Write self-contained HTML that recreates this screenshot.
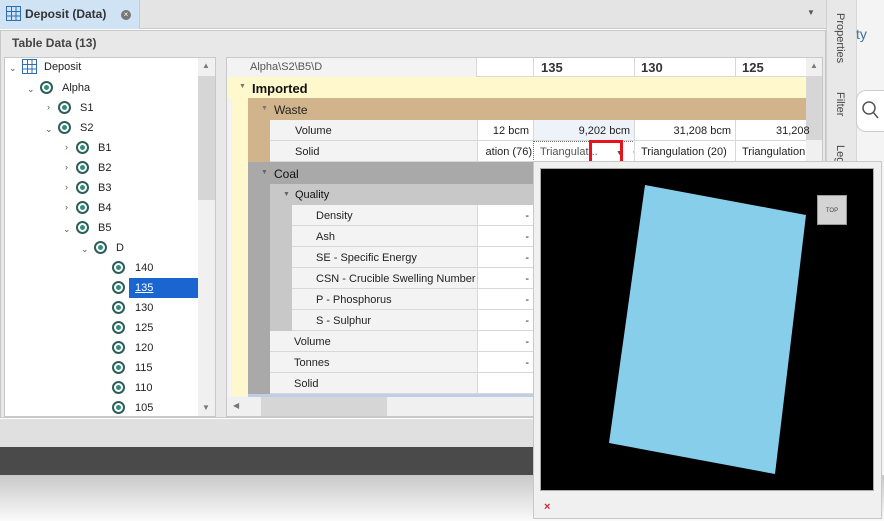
<!DOCTYPE html>
<html><head><meta charset="utf-8"><style>
*{box-sizing:border-box;margin:0;padding:0}
body{width:884px;height:521px;overflow:hidden;background:#fff;font-family:"Liberation Sans",sans-serif;font-size:11px;color:#222;position:relative}
.a{position:absolute}
.lab{position:absolute;background:#f3f3f3;height:21px;line-height:22px;border-bottom:1px solid #d8d8d8}
.val{position:absolute;background:#fff;height:21px;line-height:22px;border-bottom:1px solid #d8d8d8;border-left:1px solid #d8d8d8;text-align:right;padding-right:5px}
.ti{position:absolute;font-size:11px;height:20px;line-height:21px}
.rad{position:absolute;width:13px;height:13px;border:2px solid #2f5d5a;border-radius:50%}
.rad:after{content:"";position:absolute;left:2px;top:2px;width:5px;height:5px;border-radius:50%;background:#2f8f7c}
.chev{position:absolute;font-size:9px;color:#555}
</style></head><body>
<div class="a" style="left:0;top:0;width:884px;height:29px;background:#e4e4e4;border-bottom:1px solid #c8c8c8"></div>
<div class="a" style="left:0;top:0;width:140px;height:29px;background:#cfe3f5;border-right:1px solid #b9cfe3"></div>
<svg class="a" style="left:6px;top:6px" width="15" height="15"><rect x="0.5" y="0.5" width="14" height="14" fill="none" stroke="#2d6db5"/><path d="M0 5.5H15M0 10H15M5.5 0V15M10 0V15" stroke="#2d6db5"/></svg>
<div class="a" style="left:25px;top:7px;font-weight:bold;font-size:12px;color:#333">Deposit (Data)</div>
<div class="a" style="left:121px;top:10px;width:10px;height:10px;border-radius:50%;background:#777;color:#fff;font-size:8px;line-height:10px;text-align:center">×</div>
<div class="a" style="left:807px;top:8px;font-size:8px;color:#555">▼</div>
<div class="a" style="left:0;top:30px;width:826px;height:388px;background:#e8e8e8;border:1px solid #c8c8c8"></div>
<div class="a" style="left:12px;top:36px;font-weight:bold;font-size:12px;color:#444">Table Data (13)</div>
<div class="a" style="left:4px;top:57px;width:212px;height:360px;background:#fff;border:1px solid #c8c8c8"></div>
<div class="a" style="left:198px;top:58px;width:17px;height:358px;background:#f0f0f0"></div>
<div class="a" style="left:198px;top:76px;width:17px;height:124px;background:#d6d6d6"></div>
<div class="a" style="left:202px;top:61px;font-size:8px;color:#777">▲</div>
<div class="a" style="left:202px;top:403px;font-size:8px;color:#777">▼</div>
<div class="chev" style="left:9px;top:63px">⌄</div>
<svg class="a" style="left:22px;top:59px" width="15" height="15"><rect x="0.5" y="0.5" width="14" height="14" fill="none" stroke="#2d6db5"/><path d="M0 5.5H15M0 10H15M5.5 0V15M10 0V15" stroke="#2d6db5"/></svg>
<div class="ti" style="left:44px;top:57px">Deposit</div>
<div class="chev" style="left:27px;top:84px">⌄</div><div class="rad" style="left:40px;top:81px"></div><div class="ti" style="left:62px;top:78px">Alpha</div>
<div class="chev" style="left:47px;top:102px">›</div><div class="rad" style="left:58px;top:101px"></div><div class="ti" style="left:80px;top:98px">S1</div>
<div class="chev" style="left:45px;top:124px">⌄</div><div class="rad" style="left:58px;top:121px"></div><div class="ti" style="left:80px;top:118px">S2</div>
<div class="chev" style="left:65px;top:142px">›</div><div class="rad" style="left:76px;top:141px"></div><div class="ti" style="left:98px;top:138px">B1</div>
<div class="chev" style="left:65px;top:162px">›</div><div class="rad" style="left:76px;top:161px"></div><div class="ti" style="left:98px;top:158px">B2</div>
<div class="chev" style="left:65px;top:182px">›</div><div class="rad" style="left:76px;top:181px"></div><div class="ti" style="left:98px;top:178px">B3</div>
<div class="chev" style="left:65px;top:202px">›</div><div class="rad" style="left:76px;top:201px"></div><div class="ti" style="left:98px;top:198px">B4</div>
<div class="chev" style="left:63px;top:224px">⌄</div><div class="rad" style="left:76px;top:221px"></div><div class="ti" style="left:98px;top:218px">B5</div>
<div class="chev" style="left:81px;top:244px">⌄</div><div class="rad" style="left:94px;top:241px"></div><div class="ti" style="left:116px;top:238px">D</div>
<div class="rad" style="left:112px;top:261px"></div><div class="ti" style="left:135px;top:258px">140</div>
<div class="a" style="left:129px;top:278px;width:69px;height:20px;background:#1a66d1"></div>
<div class="rad" style="left:112px;top:281px"></div><div class="ti" style="left:135px;top:278px;color:#fff;text-decoration:underline">135</div>
<div class="rad" style="left:112px;top:301px"></div><div class="ti" style="left:135px;top:298px">130</div>
<div class="rad" style="left:112px;top:321px"></div><div class="ti" style="left:135px;top:318px">125</div>
<div class="rad" style="left:112px;top:341px"></div><div class="ti" style="left:135px;top:338px">120</div>
<div class="rad" style="left:112px;top:361px"></div><div class="ti" style="left:135px;top:358px">115</div>
<div class="rad" style="left:112px;top:381px"></div><div class="ti" style="left:135px;top:378px">110</div>
<div class="rad" style="left:112px;top:401px"></div><div class="ti" style="left:135px;top:398px">105</div>
<div class="a" style="left:226px;top:57px;width:597px;height:360px;background:#f3f3f3;border:1px solid #c8c8c8"></div>
<div class="a" style="left:227px;top:58px;width:580px;height:19px;background:#fff;border-bottom:1px solid #d8d8d8"></div>
<div class="a" style="left:227px;top:58px;width:250px;height:19px;background:#f3f3f3;border-right:1px solid #d8d8d8"></div>
<div class="a" style="left:250px;top:61px;color:#555">Alpha\S2\B5\D</div>
<div class="a" style="left:533px;top:58px;height:19px;border-left:1px solid #d8d8d8"></div>
<div class="a" style="left:634px;top:58px;height:19px;border-left:1px solid #d8d8d8"></div>
<div class="a" style="left:735px;top:58px;height:19px;border-left:1px solid #d8d8d8"></div>
<div class="a" style="left:541px;top:60px;font-weight:bold;font-size:13px;color:#333">135</div>
<div class="a" style="left:641px;top:60px;font-weight:bold;font-size:13px;color:#333">130</div>
<div class="a" style="left:742px;top:60px;font-weight:bold;font-size:13px;color:#333">125</div>
<div class="a" style="left:806px;top:58px;width:16px;height:338px;background:#f0f0f0"></div>
<div class="a" style="left:806px;top:76px;width:16px;height:64px;background:#d6d6d6"></div>
<div class="a" style="left:810px;top:61px;font-size:8px;color:#777">▲</div>
<div class="a" style="left:227px;top:77px;width:579px;height:21px;background:#fff8cc"></div>
<div class="a" style="left:232px;top:98px;width:16px;height:298px;background:#fff8cc"></div>
<div class="a" style="left:239px;top:83px;font-size:7px;color:#777">▼</div>
<div class="a" style="left:252px;top:81px;font-weight:bold;font-size:13px;color:#111">Imported</div>
<div class="a" style="left:248px;top:98px;width:558px;height:22px;background:#d2b48c"></div>
<div class="a" style="left:248px;top:120px;width:22px;height:42px;background:#d2b48c"></div>
<div class="a" style="left:261px;top:105px;font-size:7px;color:#777">▼</div>
<div class="a" style="left:274px;top:103px;font-size:12px;color:#222">Waste</div>
<div class="lab" style="left:270px;top:120px;width:208px;padding-left:25px">Volume</div>
<div class="val" style="left:477px;top:120px;width:57px">12 bcm</div>
<div class="val" style="left:533px;top:120px;width:102px;background:#eef3fa">9,202 bcm</div>
<div class="val" style="left:634px;top:120px;width:102px">31,208 bcm</div>
<div class="val" style="left:735px;top:120px;width:71px;text-align:left;padding-left:40px">31,208</div>
<div class="lab" style="left:270px;top:141px;width:208px;padding-left:25px">Solid</div>
<div class="val" style="left:477px;top:141px;width:57px;padding-right:2px">ation (76)</div>
<div class="val" style="left:533px;top:141px;width:102px;text-align:left;padding-left:6px;border:1px dotted #777;color:#555;line-height:20px">Triangulat...&nbsp;&nbsp;&nbsp;&nbsp;&nbsp;&nbsp;<span style="font-size:7px">▼</span>&nbsp;&nbsp;&nbsp;··</div>
<div class="val" style="left:634px;top:141px;width:102px;text-align:left;padding-left:6px">Triangulation (20)</div>
<div class="val" style="left:735px;top:141px;width:71px;text-align:left;padding-left:6px;overflow:hidden;white-space:nowrap">Triangulation</div>
<div class="a" style="left:589px;top:140px;width:34px;height:31px;border:3px solid #e8131a"></div>
<div class="a" style="left:248px;top:162px;width:558px;height:22px;background:#a9a9a9"></div>
<div class="a" style="left:248px;top:184px;width:22px;height:210px;background:#a9a9a9"></div>
<div class="a" style="left:261px;top:169px;font-size:7px;color:#666">▼</div>
<div class="a" style="left:274px;top:167px;font-size:12px;color:#111">Coal</div>
<div class="a" style="left:270px;top:184px;width:536px;height:21px;background:#c8c8c8"></div>
<div class="a" style="left:270px;top:205px;width:22px;height:126px;background:#c8c8c8"></div>
<div class="a" style="left:283px;top:191px;font-size:7px;color:#666">▼</div>
<div class="a" style="left:295px;top:189px;color:#111">Quality</div>
<div class="lab" style="left:292px;top:205px;width:186px;padding-left:24px">Density</div><div class="val" style="left:477px;top:205px;width:57px">-</div>
<div class="lab" style="left:292px;top:226px;width:186px;padding-left:24px">Ash</div><div class="val" style="left:477px;top:226px;width:57px">-</div>
<div class="lab" style="left:292px;top:247px;width:186px;padding-left:24px">SE - Specific Energy</div><div class="val" style="left:477px;top:247px;width:57px">-</div>
<div class="lab" style="left:292px;top:268px;width:186px;padding-left:24px">CSN - Crucible Swelling Number</div><div class="val" style="left:477px;top:268px;width:57px">-</div>
<div class="lab" style="left:292px;top:289px;width:186px;padding-left:24px">P - Phosphorus</div><div class="val" style="left:477px;top:289px;width:57px">-</div>
<div class="lab" style="left:292px;top:310px;width:186px;padding-left:24px">S - Sulphur</div><div class="val" style="left:477px;top:310px;width:57px">-</div>
<div class="lab" style="left:270px;top:331px;width:208px;padding-left:24px">Volume</div><div class="val" style="left:477px;top:331px;width:57px">-</div>
<div class="lab" style="left:270px;top:352px;width:208px;padding-left:24px">Tonnes</div><div class="val" style="left:477px;top:352px;width:57px">-</div>
<div class="lab" style="left:270px;top:373px;width:208px;padding-left:24px">Solid</div><div class="val" style="left:477px;top:373px;width:57px"></div>
<div class="a" style="left:248px;top:394px;width:558px;height:3px;background:#c0cde3"></div>
<div class="a" style="left:227px;top:397px;width:579px;height:19px;background:#f0f0f0"></div>
<div class="a" style="left:261px;top:397px;width:126px;height:19px;background:#d6d6d6"></div>
<div class="a" style="left:233px;top:401px;font-size:8px;color:#777">◀</div>
<div class="a" style="left:0;top:419px;width:826px;height:28px;background:#e0e0e0"></div>
<div class="a" style="left:0;top:447px;width:826px;height:28px;background:#4a4a4a"></div>
<div class="a" style="left:0;top:475px;width:884px;height:46px;background:linear-gradient(#c8c8c8,#fafafa)"></div>
<div class="a" style="left:826px;top:0;width:30px;height:475px;background:#e8e8e8;border-left:1px solid #d0d0d0"></div>
<div class="a" style="left:856px;top:0;width:28px;height:475px;background:#f4f4f4;border-left:1px solid #d8d8d8"></div>
<div class="a" style="left:834px;top:13px;writing-mode:vertical-rl;color:#444">Properties</div>
<div class="a" style="left:834px;top:92px;writing-mode:vertical-rl;color:#444">Filter</div>
<div class="a" style="left:834px;top:145px;writing-mode:vertical-rl;color:#444">Leg</div>
<div class="a" style="left:856px;top:26px;color:#3b6fb0;font-size:14px">ty</div>
<div class="a" style="left:856px;top:90px;width:28px;height:42px;border:1px solid #ccc;border-right:none;border-radius:10px 0 0 10px;background:#fff"></div>
<svg class="a" style="left:861px;top:100px" width="18" height="20"><circle cx="8" cy="8" r="6" fill="none" stroke="#555" stroke-width="1.5"/><path d="M12 12L17 18" stroke="#555" stroke-width="1.5"/></svg>
<div class="a" style="left:533px;top:161px;width:349px;height:358px;background:#f0f0f0;border:1px solid #c8c8c8"></div>
<div class="a" style="left:540px;top:168px;width:334px;height:323px;background:#000;border:1px solid #aaa"></div>
<svg class="a" style="left:541px;top:169px" width="332" height="321"><polygon points="104,16 265,46 234,305 68,274" fill="#87ceeb"/></svg>
<div class="a" style="left:817px;top:195px;width:30px;height:30px;background:#d4d4d4;border:1px solid #999;font-size:6px;color:#444;text-align:center;line-height:30px">TOP</div>
<div class="a" style="left:544px;top:501px;color:#d8243a;font-size:11px;font-weight:bold">×</div>
</body></html>
